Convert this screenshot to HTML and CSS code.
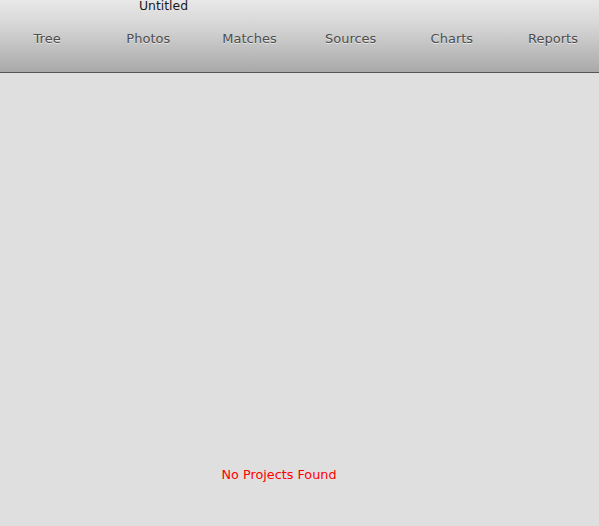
FILE: index.html
```html
<!DOCTYPE html>
<html>
<head>
<meta charset="utf-8">
<link rel="stylesheet" href="styles.css">
</head>
<body>
<div class="app">
  <header class="toolbar">
    <div class="title">Untitled</div>
    <nav class="tabs">
      <div class="tab">Tree</div>
      <div class="tab">Photos</div>
      <div class="tab">Matches</div>
      <div class="tab">Sources</div>
      <div class="tab">Charts</div>
      <div class="tab">Reports</div>
    </nav>
  </header>
  <main class="content">
    <div class="empty">No Projects Found</div>
  </main>
</div>
</body>
</html>
```
FILE: styles.css
```css
html, body {
  margin: 0;
  padding: 0;
  height: 100%;
  background: #dfdfdf;
  font-family: "DejaVu Sans", "Lucida Grande", sans-serif;
  overflow: hidden;
}
.app {
  display: flex;
  flex-direction: column;
  height: 526px;
}
.toolbar {
  height: 72px;
  background: linear-gradient(#e8e8e8 0%, #d6d6d6 35%, #a9a9a9 100%);
  border-bottom: 1px solid #555;
  box-sizing: content-box;
}
.title {
  width: 327px;
  text-align: center;
  font-size: 12.4px;
  line-height: 12px;
  color: #1a1a1a;
  height: 12px;
}
.tabs {
  display: grid;
  grid-template-columns: repeat(6, 101.2px);
  margin-left: -3.5px;
  margin-top: 19px;
}
.tab {
  text-align: center;
  font-size: 13px;
  line-height: 16px;
  color: #4d4d4d;
  text-shadow: 0 1px 0 rgba(255,255,255,0.6);
}
.content {
  flex: 1;
  display: flex;
  flex-direction: column;
  justify-content: flex-end;
}
.empty {
  width: 558px;
  text-align: center;
  color: #ff0000;
  font-size: 12.8px;
  line-height: 14px;
  margin-bottom: 44px;
}
```
